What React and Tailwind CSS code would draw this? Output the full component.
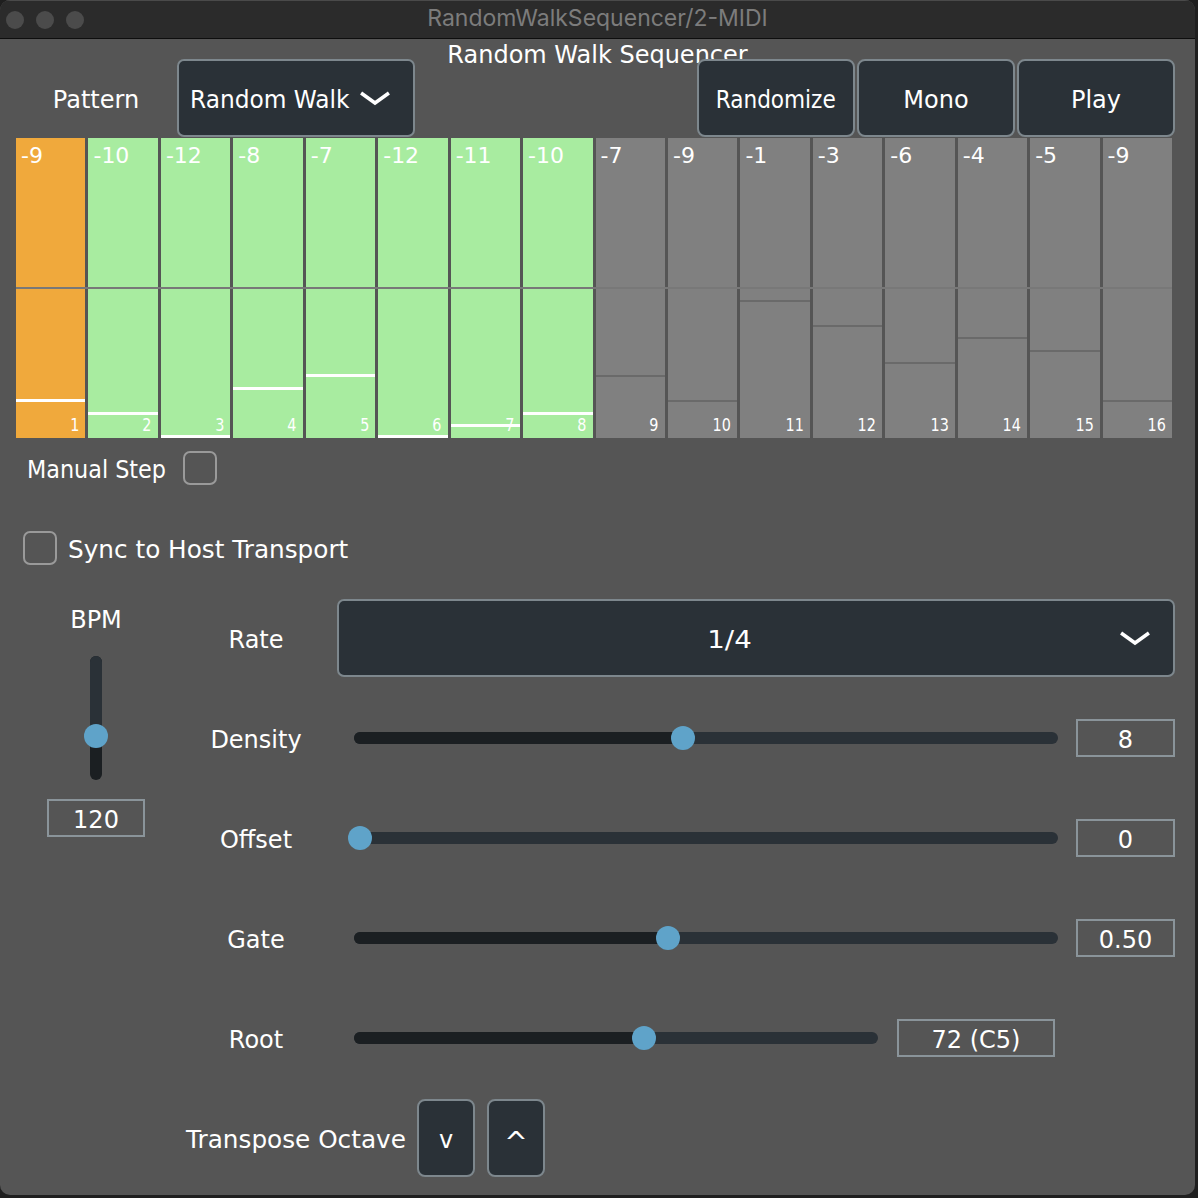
import React from "react";

const steps = [-9, -10, -12, -8, -7, -12, -11, -10, -7, -9, -1, -3, -6, -4, -5, -9];

function Chevron() {
  return (
    <svg width="30" height="15" viewBox="0 0 30 15" fill="none">
      <path d="M2.5 3 L15 12 L27.5 3" stroke="white" strokeWidth="3.5" strokeLinecap="square" />
    </svg>
  );
}

function Checkbox() {
  return <div className="w-[34px] h-[34px] rounded-[7px] border-2 border-[#9a9a9a]" />;
}

// labels sit ~2px low in the original, so text gets a little top padding
function Label({ children, className = "" }) {
  return <div className={`pt-[4px] whitespace-nowrap ${className}`}>{children}</div>;
}

function Button({ children, className = "", textClass = "" }) {
  return (
    <div
      className={`flex items-center justify-center h-[78px] rounded-[8px] border-2 border-[#7d878d] bg-[#2a3137] text-white ${className}`}
    >
      <span className={`pt-[4px] inline-block ${textClass}`}>{children}</span>
    </div>
  );
}

function ValueBox({ children, className = "" }) {
  return (
    <div
      className={`flex items-center justify-center h-[38px] border-2 border-[#8a949a] text-white ${className}`}
    >
      <span className="pt-[3px]">{children}</span>
    </div>
  );
}

// horizontal slider: thumb travel leaves 6px at each end of the track
function HSlider({ w, frac, className }) {
  const x = 6 + frac * (w - 12);
  return (
    <div className={`relative h-[24px] shrink-0 ${className}`}>
      <div className="absolute inset-x-0 top-[6px] h-[12px] rounded-full bg-[#2a3137]" />
      <div className="absolute left-0 top-[6px] h-[12px] rounded-l-full bg-[#1b1f22]" style={{ width: x }} />
      <div className="absolute top-0 w-[24px] h-[24px] rounded-full bg-[#5fa3c9]" style={{ left: x - 12 }} />
    </div>
  );
}

function Step({ value, index }) {
  const bg = index === 0 ? "bg-[#f0a93c]" : index < 8 ? "bg-[#a8eca0]" : "bg-[#808080]";
  const active = index < 8;
  const y = ((12 - value) / 24) * 300;
  return (
    <div className={`relative h-[300px] ${bg}`}>
      <span className="absolute left-[5px] top-[7px] text-[22px] leading-none text-white">{value}</span>
      {active ? (
        <div className="absolute inset-x-0 h-[3px] bg-white" style={{ top: Math.min(y - 1.5, 297) }} />
      ) : (
        <div className="absolute inset-x-0 h-[2px] bg-[#6a6a6a]" style={{ top: y - 1 }} />
      )}
      <span className="absolute right-[6px] bottom-[4px] text-[18px] leading-none text-white inline-block origin-right scale-x-[0.8]">
        {index + 1}
      </span>
    </div>
  );
}

export default function App() {
  return (
    <div className="w-[1198px] h-[1198px] bg-[#1f1f1f] font-['DejaVu_Sans',sans-serif] text-[24px] leading-none text-white">
      <div className="w-[1195px] h-[1195px] rounded-[10px] overflow-hidden bg-[#555555]">
        {/* Title bar */}
        <div className="grid grid-cols-[1fr_auto_1fr] items-center h-[39px] bg-[#2b2b2b] border-t border-[#4a4a4a] border-b border-b-[#0e0e0e]">
          <div className="flex items-center gap-[12px] pl-[6px]">
            <div className="w-[18px] h-[18px] rounded-full bg-[#4b4b4b]" />
            <div className="w-[18px] h-[18px] rounded-full bg-[#4b4b4b]" />
            <div className="w-[18px] h-[18px] rounded-full bg-[#4b4b4b]" />
          </div>
          <div className="font-['Inter',sans-serif] text-[23px] text-[#7c7c7c] pb-[2px]">RandomWalkSequencer/2-MIDI</div>
          <div />
        </div>

        {/* Plugin title, partly hidden under the buttons */}
        <div className="h-[20px] pt-[4px] text-center">Random Walk Sequencer</div>

        {/* Header row */}
        <div className="relative z-10 flex items-center h-[78px] pl-[16px] pr-[20px]">
          <Label className="w-[160px] text-center">Pattern</Label>
          <div className="ml-[1px] flex items-center justify-between w-[238px] h-[78px] pl-[11px] pr-[23px] rounded-[7px] border-2 border-[#7d878d] bg-[#2a3137]">
            <Label className="inline-block origin-left scale-x-[0.97]">Random Walk</Label>
            <Chevron />
          </div>
          <div className="ml-auto flex gap-[2px]">
            <Button className="w-[158px]" textClass="scale-x-[0.9]">Randomize</Button>
            <Button className="w-[158px]">Mono</Button>
            <Button className="w-[158px]">Play</Button>
          </div>
        </div>

        {/* Step grid */}
        <div className="relative mt-[1px] ml-[16px] w-[1156px] grid grid-cols-16 gap-x-[3px]">
          {steps.map((v, i) => (
            <Step key={i} value={v} index={i} />
          ))}
          <div className="absolute inset-x-0 top-[149px] h-[2px] bg-[#787878]" />
        </div>

        {/* Manual step */}
        <div className="mt-[13px] flex items-center gap-[18px] pl-[27px] h-[34px]">
          <Label className="w-[138px] origin-left scale-x-[0.93]">Manual Step</Label>
          <Checkbox />
        </div>

        {/* Sync */}
        <div className="mt-[46px] flex items-center gap-[11px] pl-[23px] h-[34px]">
          <Checkbox />
          <Label className="origin-left scale-x-[1.03]">Sync to Host Transport</Label>
        </div>

        {/* Lower controls */}
        <div className="mt-[34px] flex pl-[16px] pr-[20px]">
          {/* BPM */}
          <div className="w-[160px] flex flex-col items-center">
            <div className="h-[38px] flex items-center">
              <Label>BPM</Label>
            </div>
            <div className="relative mt-[19px] w-[24px] h-[124px]">
              <div className="absolute left-[6px] top-0 w-[12px] h-[124px] rounded-full bg-[#1b1f22]" />
              <div className="absolute left-[6px] top-0 w-[12px] h-[80px] rounded-t-full bg-[#2a3137]" />
              <div className="absolute left-0 top-[68px] w-[24px] h-[24px] rounded-full bg-[#5fa3c9]" />
            </div>
            <ValueBox className="mt-[19px] w-[98px]">120</ValueBox>
          </div>

          {/* Rows */}
          <div className="flex-1 flex flex-col gap-[22px]">
            <div className="flex items-center h-[78px]">
              <Label className="w-[160px] text-center">Rate</Label>
              <div className="ml-[1px] flex-1 flex items-center h-[78px] rounded-[7px] border-2 border-[#7d878d] bg-[#2a3137]">
                <Label className="flex-1 text-center scale-x-[1.15]">1/4</Label>
                <div className="pr-[23px]">
                  <Chevron />
                </div>
              </div>
            </div>

            <div className="flex items-center h-[78px]">
              <Label className="w-[160px] text-center">Density</Label>
              <HSlider w={704} frac={7 / 15} className="ml-[18px] w-[704px]" />
              <ValueBox className="ml-[18px] w-[99px]">8</ValueBox>
            </div>

            <div className="flex items-center h-[78px]">
              <Label className="w-[160px] text-center">Offset</Label>
              <HSlider w={704} frac={0} className="ml-[18px] w-[704px]" />
              <ValueBox className="ml-[18px] w-[99px]">0</ValueBox>
            </div>

            <div className="flex items-center h-[78px]">
              <Label className="w-[160px] text-center">Gate</Label>
              <HSlider w={704} frac={0.4 / 0.9} className="ml-[18px] w-[704px]" />
              <ValueBox className="ml-[18px] w-[99px]">0.50</ValueBox>
            </div>

            <div className="flex items-center h-[78px]">
              <Label className="w-[160px] text-center">Root</Label>
              <HSlider w={524} frac={0.555} className="ml-[18px] w-[524px]" />
              <ValueBox className="ml-[19px] w-[158px]">72 (C5)</ValueBox>
            </div>

            <div className="flex items-center h-[78px]">
              <Label className="w-[240px] text-center scale-x-[1.03]">Transpose Octave</Label>
              <Button className="ml-[1px] w-[58px]">v</Button>
              <Button className="ml-[12px] w-[58px]" textClass="text-[28px] pt-[10px]">^</Button>
            </div>
          </div>
        </div>
      </div>
    </div>
  );
}
